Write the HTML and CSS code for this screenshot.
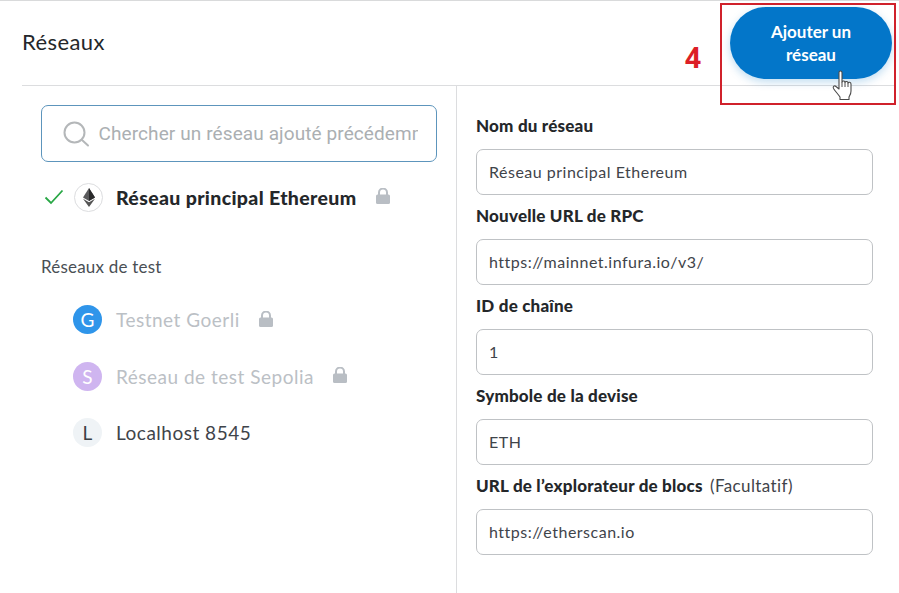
FILE: index.html
```html
<!DOCTYPE html>
<html lang="fr">
<head>
<meta charset="utf-8">
<title>Réseaux</title>
<link rel="stylesheet" href="styles.css">
</head>
<body>
<div class="page">
  <header class="header">
    <h1 class="title">Réseaux</h1>
    <button class="add-btn">Ajouter un réseau</button>
  </header>
  <main class="columns">
    <section class="list-col">
      <div class="search">
        <svg class="search-icon" width="28" height="28" viewBox="0 0 28 28" fill="none" stroke="#b4b7b9" stroke-width="2"><circle cx="12.5" cy="12.500" r="10"/><path d="M20 20l6 5.500" stroke-linecap="round"/></svg>
        <span class="placeholder">Chercher un réseau ajouté précédemment</span>
      </div>
      <div class="main-net">
        <svg class="check" width="20" height="16" viewBox="0 0 20 16" fill="none" stroke="#28a745" stroke-width="1.800"><path d="M1.500 8.500l5.500 5.500L18.500 1.500"/></svg>
        <span class="avatar avatar-eth">
          <svg width="12" height="19" viewBox="0 0 14 22"><path d="M7 0L0 11l7 4 7-4z" fill="#5a5a5c"/><path d="M7 0v15l7-4z" fill="#2a2a2b"/><path d="M0 12.500L7 22l7-9.500-7 4z" fill="#555"/></svg>
        </span>
        <strong class="net-active">Réseau principal Ethereum</strong>
        <svg class="lock" width="14" height="16" viewBox="0 0 14 16"><path d="M3 7V4.500a4 4 0 0 1 8 0V7" fill="none" stroke="#b9bec4" stroke-width="2"/><rect y="6.500" width="14" height="9.500" rx="1.500" fill="#b9bec4"/></svg>
      </div>
      <h2 class="subhead">Réseaux de test</h2>
      <ul class="test-list">
        <li class="net net-goerli">
          <span class="avatar avatar-g">G</span>
          <span class="net-name muted">Testnet Goerli</span>
          <svg class="lock" width="14" height="16" viewBox="0 0 14 16"><path d="M3 7V4.500a4 4 0 0 1 8 0V7" fill="none" stroke="#b9bec4" stroke-width="2"/><rect y="6.500" width="14" height="9.500" rx="1.500" fill="#b9bec4"/></svg>
        </li>
        <li class="net net-sepolia">
          <span class="avatar avatar-s">S</span>
          <span class="net-name muted">Réseau de test Sepolia</span>
          <svg class="lock" width="14" height="16" viewBox="0 0 14 16"><path d="M3 7V4.500a4 4 0 0 1 8 0V7" fill="none" stroke="#b9bec4" stroke-width="2"/><rect y="6.500" width="14" height="9.500" rx="1.500" fill="#b9bec4"/></svg>
        </li>
        <li class="net net-local">
          <span class="avatar avatar-l">L</span>
          <span class="net-name">Localhost 8545</span>
        </li>
      </ul>
    </section>
    <section class="form-col">
      <div class="field"><div class="label">Nom du réseau</div><div class="input">Réseau principal Ethereum</div></div>
      <div class="field"><div class="label">Nouvelle URL de RPC</div><div class="input">https://mainnet.infura.io/v3/</div></div>
      <div class="field"><div class="label">ID de chaîne</div><div class="input">1</div></div>
      <div class="field"><div class="label">Symbole de la devise</div><div class="input">ETH</div></div>
      <div class="field"><div class="label">URL de l’explorateur de blocs <span class="optional">(Facultatif)</span></div><div class="input">https://etherscan.io</div></div>
    </section>
  </main>
  <div class="step">4</div>
  <div class="callout"></div>
  <svg class="hand" width="24" height="32" viewBox="0 0 24 32"><path d="M7 2.500c0-2 3-2 3 0V12c.5-1.500 3-1.500 3 .5 .5-1.500 3-1.500 3 .5 .5-1.200 3-1 3 1v7c0 3-1 4-2 6v2.500H8V27c-2-3-5-6-6.500-8.500-1-2 1-3.500 2.500-2L7 19z" fill="#fff" stroke="#4a4a4a" stroke-width="1.100" stroke-linejoin="round"/><path d="M10 12v5M13 12.500V17M16 13v4" stroke="#4a4a4a" stroke-width="1" fill="none"/></svg>
</div>
</body>
</html>
```
FILE: styles.css
```css
* { box-sizing: border-box; }
html, body { margin: 0; padding: 0; background: #fff; }
body { font-family: Lato, "Liberation Sans", sans-serif; color: #24272a; overflow: hidden; }
.page { position: relative; width: 899px; height: 593px; border-top: 1px solid #d9dadb; overflow: hidden; }
.header { display: flex; justify-content: space-between; align-items: flex-start; height: 85px; margin: 0 4px 0 22px; padding: 6px 3px 0 0; border-bottom: 1px solid #dcdddf; }
.title { margin: 21px 0 0; font-size: 22px; line-height: 28px; font-weight: 400; letter-spacing: .4px; }
.add-btn { width: 162px; height: 72px; border: 0; border-radius: 36px; padding: 0 30px; background: #0376c9; color: #fff; font: 700 17px/23px Lato, "Liberation Sans", sans-serif; box-shadow: 0 3px 8px rgba(3,118,201,.25); }
.columns { display: flex; height: 507px; }
.list-col { width: 457px; padding: 19px 19px 0 41px; border-right: 1px solid #dcdddf; }
.search { display: flex; align-items: center; gap: 8.500px; height: 57px; padding: 0 18px 0 20px; border: 1.500px solid #5d95bc; border-radius: 7px; overflow: hidden; }
.search-icon { flex: none; }
.placeholder { font: 400 19px/24px Roboto, sans-serif; color: #abafb2; white-space: nowrap; overflow: hidden; letter-spacing: .1px; }
.main-net { display: flex; align-items: center; height: 28px; margin: 21px 0 0 3px; }
.check { flex: none; margin-right: 10px; }
.avatar { flex: none; display: flex; align-items: center; justify-content: center; width: 29px; height: 29px; border-radius: 50%; font-size: 19px; }
.avatar-eth { border: 1px solid #dcdddf; background: #fff; }
.avatar-g { background: #2f95ea; color: #fff; }
.avatar-s { background: #cfb5f0; color: #fff; }
.avatar-l { background: #eff3f6; color: #3b4046; }
.net-active { margin-left: 13px; font-size: 19.500px; font-weight: 900; letter-spacing: .35px; white-space: nowrap; }
.lock { flex: none; }
.main-net .lock { margin: -2px 0 0 19px; }
.subhead { margin: 46px 0 0; font-size: 17px; line-height: 20px; font-weight: 400; color: #4a4f55; letter-spacing: .2px; }
.test-list { list-style: none; margin: 28px 0 0 32px; padding: 0; }
.net { display: flex; align-items: center; height: 29px; margin-bottom: 27.500px; }
.net-name { margin-left: 14px; font-size: 19px; color: #3f444a; letter-spacing: .5px; white-space: nowrap; }
.net-name.muted { color: #bbc0c5; }
.net .lock { margin: -2px 0 0 19px; }
.form-col { flex: 1; padding: 30px 0 0 19px; }
.field { width: 397px; margin-bottom: 11px; }
.label { height: 20px; margin-bottom: 13px; font-size: 17px; line-height: 20px; font-weight: 900; letter-spacing: .2px; white-space: nowrap; }
.optional { margin-left: 3px; font-weight: 400; font-size: 17px; color: #3f444a; letter-spacing: .4px; }
.input { display: flex; align-items: center; height: 46px; padding: 0 12px 2px; border: 1px solid #bfc2c5; border-radius: 7px; font-size: 16px; color: #3f444a; letter-spacing: .5px; }
.step { position: absolute; left: 685px; top: 40px; font: 700 28px/32px "Open Sans", sans-serif; color: #dc1f26; }
.callout { position: absolute; left: 720px; top: 2px; width: 176px; height: 102px; border: 2px solid #d0212b; }
.hand { position: absolute; left: 832px; top: 69px; }
```
